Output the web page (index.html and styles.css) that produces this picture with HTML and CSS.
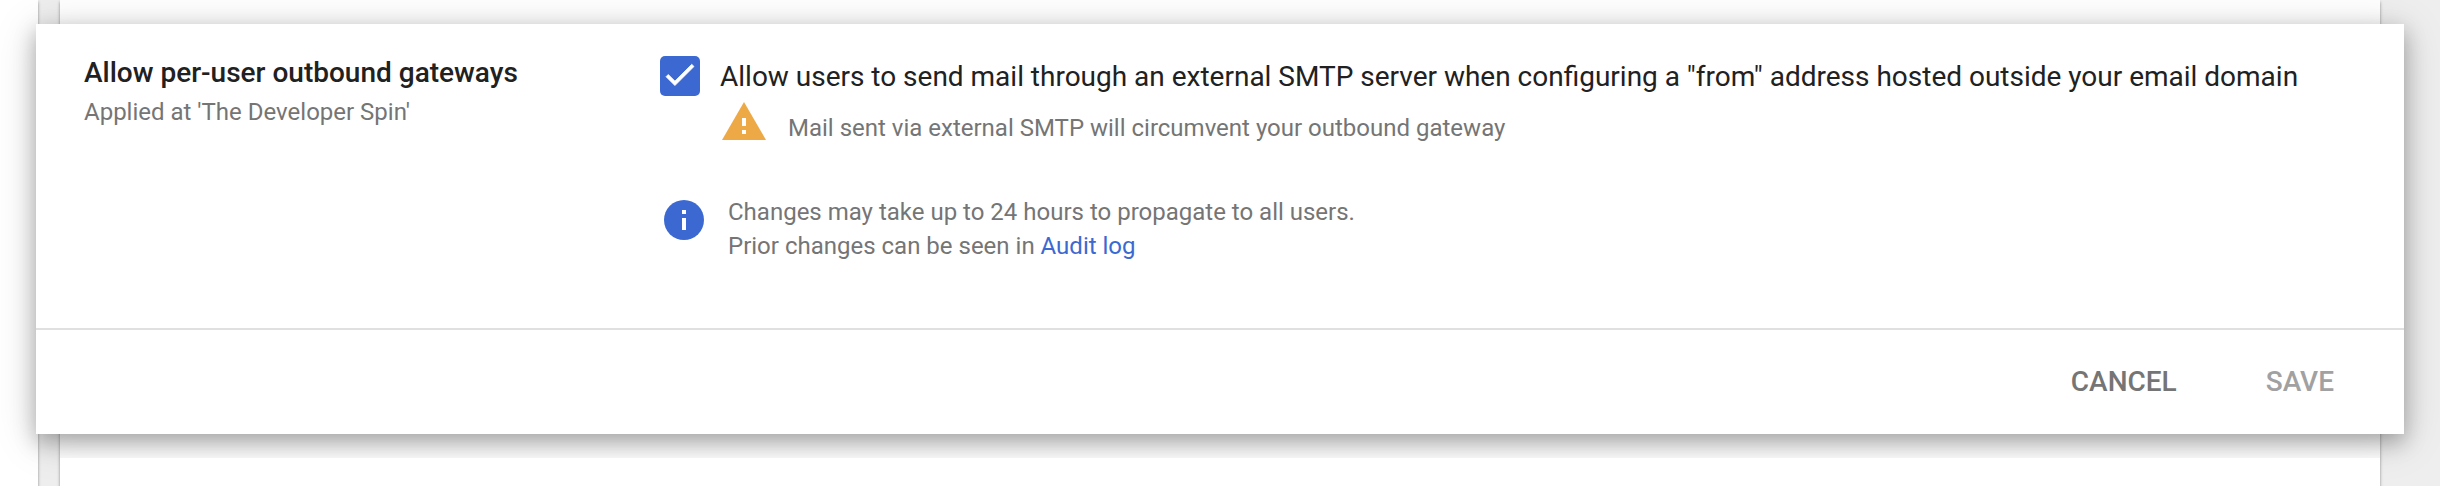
FILE: index.html
```html
<!DOCTYPE html>
<html lang="en">
<head>
<meta charset="utf-8">
<title>Allow per-user outbound gateways</title>
<link rel="stylesheet" href="styles.css">
</head>
<body>
<div class="page">
  <div class="sidebar"></div>
  <div class="content"></div>
  <div class="next-section"></div>
  <section class="card">
    <div class="card-body">
      <header class="setting">
        <h2 class="setting-title">Allow per-user outbound gateways</h2>
        <p class="setting-scope">Applied at 'The Developer Spin'</p>
      </header>
      <div class="options">
        <div class="option">
          <svg class="checkbox" viewBox="0 0 40 40"><rect width="40" height="40" rx="5" fill="#3c69d1"/><path d="M9 16.17 4.83 12 3.41 13.41 9 19 21 7 19.59 5.59z" transform="translate(.6 -.6) scale(1.59)" fill="#fff" stroke="#fff" stroke-width=".45"/></svg>
          <span class="option-label">Allow users to send mail through an external SMTP server when configuring a "from" address hosted outside your email domain</span>
        </div>
        <div class="warning">
          <svg class="warning-icon" viewBox="0 0 44 38"><path d="M0 38h44L22 0z" fill="#eea947"/><path d="M20 16h4v8h-4zM20 28h4v4h-4z" fill="#fff"/></svg>
          <span class="warning-text">Mail sent via external SMTP will circumvent your outbound gateway</span>
        </div>
        <div class="info">
          <svg class="info-icon" viewBox="0 0 40 40"><circle cx="20" cy="20" r="20" fill="#3c69d1"/><path d="M18 10h4v4h-4zM18 18h4v12h-4z" fill="#fff"/></svg>
          <p class="info-text">Changes may take up to 24 hours to propagate to all users.<br>Prior changes can be seen in <a class="link">Audit log</a></p>
        </div>
      </div>
    </div>
    <footer class="actions">
      <span class="button cancel">CANCEL</span>
      <span class="button save">SAVE</span>
    </footer>
  </section>
</div>
</body>
</html>
```
FILE: styles.css
```css
html { overflow: hidden; }
body { margin: 0; font-family: Roboto, sans-serif; font-size: 24px; color: #212121; }
h2, p { margin: 0; }
svg { display: block; flex: none; }
.page {
  position: relative;
  display: grid;
  grid-template-columns: 38px 22px 2320px 1fr;
  grid-template-rows: 458px 28px;
  height: 486px;
  overflow: hidden;
  background: #eee;
}
.sidebar { grid-column: 1; grid-row: 1 / 3; background: #fff; box-shadow: 0 2px 3px rgba(0,0,0,.4); }
.content { grid-column: 3; grid-row: 1 / 3; background: #fff; box-shadow: 0 2px 3px rgba(0,0,0,.4); }
.next-section { grid-column: 3; grid-row: 2; background: #fff; z-index: 2; }
/* The raised card lies over the page panels */
.card {
  position: absolute;
  top: 24px; left: 36px;
  width: 2368px; height: 410px;
  display: flex; flex-direction: column;
  background: #fff;
  z-index: 1;
  box-shadow: 0 8px 20px rgba(0,0,0,.27), 0 6px 40px rgba(0,0,0,.17);
}
.card-body { display: flex; height: 304px; }
.setting { width: 576px; padding: 33px 0 0 48px; box-sizing: border-box; }
.setting-title { font-size: 28px; line-height: 32px; font-weight: 500; white-space: nowrap; }
.setting-scope { margin-top: 7px; line-height: 32px; color: #757575; }
.options { padding: 32px 0 0 48px; }
.option { display: flex; height: 40px; gap: 20px; }
.checkbox { width: 40px; height: 40px; }
.option-label { font-size: 28px; line-height: 42px; word-spacing: -.05px; white-space: nowrap; }
.warning { display: flex; gap: 22px; padding: 6px 0 0 62px; color: #757575; }
.warning-icon { width: 44px; height: 38px; }
.warning-text { line-height: 32px; padding-top: 10px; white-space: nowrap; }
.info { display: flex; gap: 24px; padding: 51px 0 0 4px; color: #757575; }
.info-icon { width: 40px; height: 40px; margin-top: 5px; }
.info-text { line-height: 34px; white-space: nowrap; }
.link { color: #3c69d1; }
.actions { flex: 1; display: flex; align-items: center; justify-content: flex-end; gap: 89px; padding-right: 70px; border-top: 2px solid #e0e0e0; }
.button { font-size: 28px; line-height: 32px; font-weight: 500; }
.cancel { color: #757575; }
.save { color: #a1a1a1; }
```
